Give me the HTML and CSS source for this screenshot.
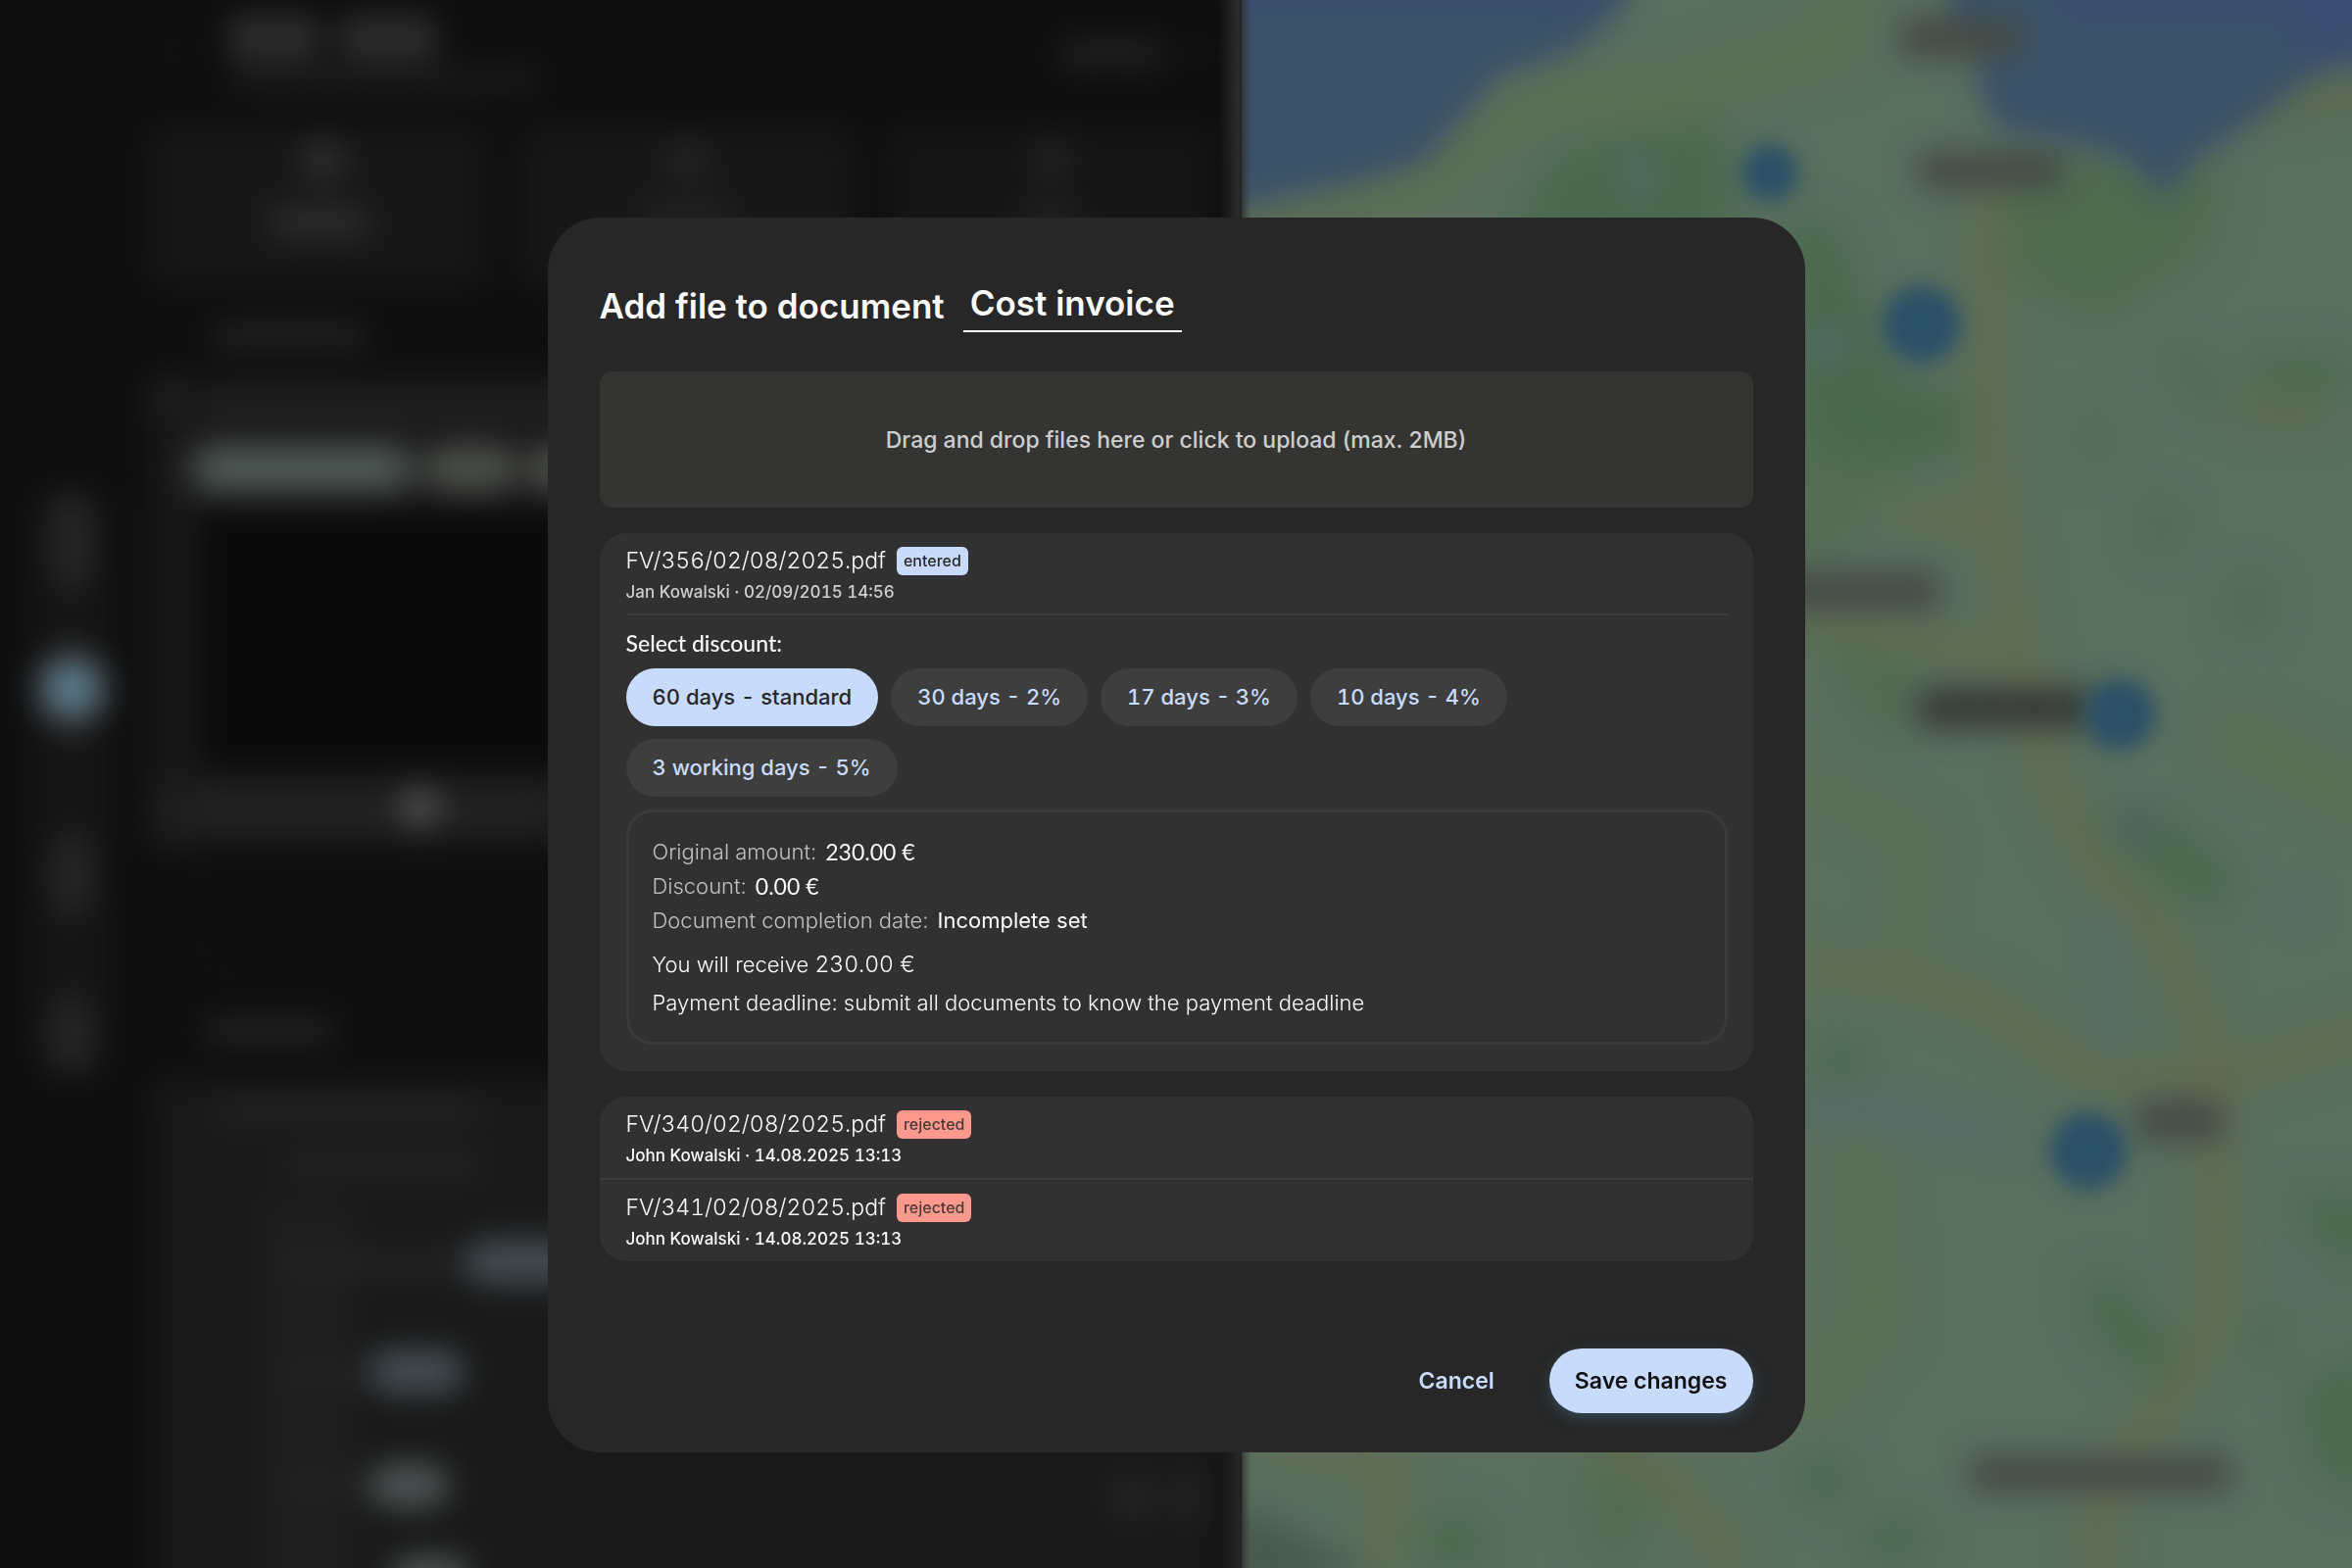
FILE: index.html
```
<!DOCTYPE html>
<html lang="en">
<head>
<meta charset="utf-8">
<meta name="viewport" content="width=device-width, initial-scale=1">
<title>Add file to document</title>
<link rel="stylesheet" href="styles.css">
</head>
<body>
<svg class="backdrop" viewBox="0 0 1568 1045" preserveAspectRatio="xMidYMid slice" aria-hidden="true">
  <defs>
    <filter id="soft" filterUnits="userSpaceOnUse" x="-80" y="-80" width="1730" height="1210" color-interpolation-filters="sRGB"><feGaussianBlur stdDeviation="10"/></filter>
    <filter id="soft-small" filterUnits="userSpaceOnUse" x="-80" y="-80" width="1730" height="1210" color-interpolation-filters="sRGB"><feGaussianBlur stdDeviation="7"/></filter>
    <filter id="softer" filterUnits="userSpaceOnUse" x="-80" y="-80" width="1730" height="1210" color-interpolation-filters="sRGB"><feGaussianBlur stdDeviation="13"/></filter>
    <linearGradient id="edge" x1="0" x2="1" y1="0" y2="0">
      <stop offset="0" stop-color="#2b2c2d" stop-opacity="0"/>
      <stop offset="0.6" stop-color="#2b2c2d"/>
      <stop offset="1" stop-color="#2b2c2d" stop-opacity="0"/>
    </linearGradient>
    <clipPath id="mapClip"><rect x="828" y="0" width="740" height="1045"/></clipPath>
    <clipPath id="appClip"><rect x="0" y="0" width="828" height="1045"/></clipPath>
  </defs>
  <rect width="1568" height="1045" fill="#0e0e0e"/>

  <!-- map -->
  <g clip-path="url(#mapClip)">
    <rect x="820" width="748" height="1045" fill="#5a6f5e"/>
    <g filter="url(#softer)">
      <g fill="#4b694f">
        <path d="M1012 145L1035 100L1150 80L1160 160H1012Z"/>
        <path d="M1190 140L1225 150L1262 250L1310 262L1312 300L1262 318L1200 312Z"/>
        <path d="M1312 112L1400 100L1484 110L1470 170L1400 215L1345 190Z" fill="#506b50"/>
        <path d="M1195 300L1260 310L1240 360L1195 380Z" fill="#546c54"/>
        <ellipse cx="1397" cy="292" rx="14" ry="20" fill="#546c54"/>
        <ellipse cx="1441" cy="350" rx="10" ry="18"/>
        <ellipse cx="1499" cy="403" rx="13" ry="18"/>
        <path d="M1440 232L1460 230L1484 270L1470 276Z"/>
        <path d="M1500 235L1568 238V262L1500 254Z"/>
        <path d="M1400 545L1450 548L1492 580L1480 612L1440 590Z"/>
        <ellipse cx="1226" cy="706" rx="22" ry="14"/>
        <path d="M1385 855L1410 850L1452 900L1440 925L1400 895Z"/>
        <ellipse cx="1510" cy="892" rx="12" ry="14"/>
        <path d="M1526 790L1580 800V850L1545 830Z"/>
        <path d="M1530 925L1580 900V1000L1545 985Z"/>
        <ellipse cx="1216" cy="987" rx="20" ry="18"/>
        <ellipse cx="1262" cy="1026" rx="24" ry="16"/>
        <ellipse cx="970" cy="1028" rx="24" ry="20"/>
        <path d="M820 1000L880 1030L920 1060H820Z" fill="#48584c"/>
        <path d="M1050 980H1110L1090 1040H1060Z" fill="#526b53"/>
        <path d="M1195 400L1260 430L1290 470L1250 500Z" fill="#526b53"/>
      </g>
      <g fill="none" stroke="#606c50" stroke-width="22" stroke-linejoin="round">
        <path d="M820 155L900 130L955 118L985 90L1040 62L1110 66L1150 50L1225 30L1235 -20" stroke="#5c6e54" stroke-width="34"/>
        <path d="M1327 120L1325 217L1327 317L1342 417L1366 520L1400 580L1443 625L1472 692L1477 823L1477 880L1438 945L1400 1000L1400 1060"/>
        <path d="M1190 644L1260 650L1322 668L1390 714L1472 722L1520 705L1590 685"/>
        <path d="M1480 485L1590 540" stroke="#5c6e54" stroke-width="34"/>
        <path d="M1060 960L1110 985L1160 1045"/>
        <path d="M840 960L930 975L920 1045"/>
        <path d="M1195 410L1270 425L1350 440"/>
        <path d="M1260 340L1330 350"/>
        <path d="M1240 760L1250 880L1200 940" stroke="#5c6e54" stroke-width="34"/>
        <path d="M1490 70L1580 60M1490 270L1550 275" stroke="#5c6950"/>
        <path d="M1200 520L1280 560L1270 640" stroke="#5c6e54"/>
      </g>
    </g>
    <g filter="url(#soft)">
      <g fill="#3a5268" stroke="#3b4d6c" stroke-width="8">
        <path d="M760 -60H1098L1078 4L1047 30L994 48L970 77L945 105L900 118L858 126L760 150Z"/>
        <path d="M1290 -60L1306 10L1346 20L1320 50L1334 82L1390 92L1424 104L1443 126L1460 102L1487 86L1540 46L1640 20V-60Z"/>
      </g>
      <path d="M760 -60H1078L1058 6H760Z" fill="#3b4c70"/>
      <path d="M1330 -60H1640V26L1540 40L1520 14H1380Z" fill="#3b4c70"/>
      <g fill="#454b46">
        <rect x="1266" y="11" width="82" height="28" rx="8"/>
        <rect x="1278" y="101" width="98" height="25" rx="8"/>
        <rect x="1190" y="380" width="104" height="27" rx="8"/>
        <rect x="1278" y="459" width="118" height="26" rx="8" fill="#353836"/>
        <rect x="1424" y="733" width="58" height="28" rx="8"/>
        <rect x="1312" y="970" width="176" height="24" rx="8"/>
      </g>
      <g fill="#566b6a">
        <circle cx="1092" cy="118" r="11"/>
        <circle cx="1218" cy="230" r="12"/>
        <path d="M1200 730L1260 732L1340 752L1345 765L1250 750L1200 746Z"/>
        <path d="M1408 545L1430 540L1440 552L1420 560Z" fill="#4d6065"/>
        <circle cx="1532" cy="604" r="9"/>
        <circle cx="1532" cy="850" r="8"/>
        <path d="M1400 610H1410L1412 700H1402Z"/>
      </g>
    </g>
    <g filter="url(#soft-small)" fill="#2a5067">
      <circle cx="1180" cy="115" r="19"/>
      <circle cx="1281" cy="216" r="26"/>
      <circle cx="1413" cy="476" r="24"/>
      <circle cx="1392" cy="767" r="26"/>
    </g>
  </g>
  <rect x="812" width="22" height="1045" fill="url(#edge)"/>

  <!-- application panel -->
  <g clip-path="url(#appClip)">
    <g filter="url(#soft)" fill="#161616">
      <rect x="22" y="322" width="52" height="400" rx="24"/>
      <rect x="98" y="84" width="228" height="108" rx="12" fill="#171717"/>
      <rect x="345" y="84" width="226" height="108" rx="12" fill="#171717"/>
      <rect x="590" y="84" width="220" height="108" rx="12" fill="#151515"/>
      <rect x="98" y="248" width="700" height="320" rx="12" fill="#181818"/>
      <rect x="134" y="340" width="680" height="172" fill="#0a0a0a"/>
      <rect x="100" y="522" width="700" height="38" rx="8" fill="#1e1e1e"/>
      <rect x="134" y="562" width="680" height="88" fill="#0e0e0e" stroke="#141414" stroke-width="4"/>
      <rect x="100" y="718" width="718" height="380" rx="12" fill="#191919"/>
      <rect x="178" y="800" width="58" height="260" fill="#1e1e1e"/>
      <g fill="#2d2d2d">
        <rect x="152" y="10" width="62" height="30" rx="8"/>
        <rect x="226" y="10" width="66" height="30" rx="8"/>
        <rect x="154" y="44" width="206" height="18" rx="6" fill="#1b1b1b"/>
        <rect x="705" y="25" width="72" height="22" rx="8" fill="#1f1f1f"/>
        <rect x="784" y="30" width="26" height="10" rx="5" fill="#151515"/>
        <circle cx="116" cy="35" r="7" fill="#141414"/>
        <circle cx="216" cy="107" r="15"/>
        <circle cx="458" cy="107" r="14" fill="#242424"/>
        <circle cx="701" cy="107" r="14" fill="#222222"/>
        <rect x="180" y="138" width="66" height="20" rx="8"/>
        <rect x="428" y="136" width="60" height="18" rx="8" fill="#242424"/>
        <rect x="678" y="136" width="44" height="18" rx="8" fill="#222222"/>
        <rect x="140" y="214" width="106" height="19" rx="8" fill="#212121"/>
        <rect x="134" y="264" width="260" height="16" rx="8" fill="#212121"/>
        <circle cx="110" cy="264" r="12" fill="#1f1f1f"/>
        <rect x="124" y="294" width="156" height="36" rx="18" fill="#3c3f3d"/>
        <rect x="134" y="301" width="134" height="22" rx="11" fill="#4f5c57"/>
        <rect x="282" y="296" width="64" height="32" rx="16" fill="#4a4d49"/>
        <rect x="350" y="296" width="64" height="32" rx="16" fill="#4a4d49"/>
        <rect x="132" y="534" width="230" height="12" rx="6" fill="#252525"/>
        <circle cx="280" cy="538" r="14" fill="#4a4c4a"/>
        <rect x="135" y="678" width="90" height="18" rx="8" fill="#222222"/>
        <rect x="144" y="732" width="176" height="16" rx="8" fill="#222222"/>
        <rect x="190" y="768" width="130" height="15" rx="7" fill="#242424"/>
        <rect x="185" y="834" width="140" height="16" rx="7" fill="#232323"/>
        <rect x="185" y="908" width="60" height="16" rx="7" fill="#222222"/>
        <rect x="185" y="982" width="60" height="16" rx="7" fill="#222222"/>
        <rect x="310" y="826" width="80" height="30" rx="15" fill="#434c51"/>
        <rect x="246" y="899" width="64" height="30" rx="15" fill="#434c51"/>
        <rect x="246" y="975" width="54" height="30" rx="15" fill="#4b5352"/>
        <rect x="260" y="1037" width="54" height="30" rx="15" fill="#4b5352"/>
        <circle cx="755" cy="998" r="13" fill="#272727"/>
        <circle cx="790" cy="998" r="12" fill="#252525"/>
        <rect x="34" y="330" width="28" height="62" rx="14" fill="#262626"/>
        <rect x="34" y="556" width="28" height="54" rx="14" fill="#262626"/>
        <rect x="34" y="664" width="28" height="50" rx="14" fill="#262626"/>
      </g>
      <circle cx="48" cy="459" r="26" fill="#454a4c"/>
      <circle cx="48" cy="459" r="15" fill="#5a8096"/>
    </g>
  </g>
</svg>

<main class="stage">
  <form class="modal" role="dialog" aria-labelledby="modal-title">
    <header class="modal-header">
      <h1 class="modal-title" id="modal-title">Add file to document</h1>
      <select class="doc-type" aria-label="Document type">
        <option selected>Cost invoice</option>
      </select>
    </header>

    <label class="dropzone">
      <input class="visually-hidden" type="file">
      <span>Drag and drop files here or click to upload (max. 2MB)</span>
    </label>

    <section class="card">
      <div class="file file-open">
        <div class="file-line">
          <span class="file-name">FV/356/02/08/2025.pdf</span>
          <span class="badge badge-entered">entered</span>
        </div>
        <p class="file-meta file-meta-muted">Jan Kowalski · 02/09/2015 14:56</p>
      </div>

      <fieldset class="discounts">
        <legend class="discounts-title">Select discount:</legend>
        <div class="chips">
          <label class="chip"><input class="visually-hidden" type="radio" name="discount" checked><span>60 days - standard</span></label>
          <label class="chip"><input class="visually-hidden" type="radio" name="discount"><span>30 days - 2%</span></label>
          <label class="chip"><input class="visually-hidden" type="radio" name="discount"><span>17 days - 3%</span></label>
          <label class="chip"><input class="visually-hidden" type="radio" name="discount"><span>10 days - 4%</span></label>
          <label class="chip"><input class="visually-hidden" type="radio" name="discount"><span>3 working days - 5%</span></label>
        </div>
      </fieldset>

      <div class="summary">
        <dl class="details">
          <div class="detail"><dt>Original amount:</dt><dd class="amount">230.00 €</dd></div>
          <div class="detail"><dt>Discount:</dt><dd class="amount">0.00 €</dd></div>
          <div class="detail"><dt>Document completion date:</dt><dd>Incomplete set</dd></div>
        </dl>
        <p class="outcome">You will receive <span class="outcome-amount">230.00 €</span></p>
        <p class="outcome">Payment deadline: submit all documents to know the payment deadline</p>
      </div>
    </section>

    <section class="card card-list">
      <div class="file">
        <div class="file-line">
          <span class="file-name">FV/340/02/08/2025.pdf</span>
          <span class="badge badge-rejected">rejected</span>
        </div>
        <p class="file-meta">John Kowalski · 14.08.2025 13:13</p>
      </div>
      <div class="file">
        <div class="file-line">
          <span class="file-name">FV/341/02/08/2025.pdf</span>
          <span class="badge badge-rejected">rejected</span>
        </div>
        <p class="file-meta">John Kowalski · 14.08.2025 13:13</p>
      </div>
    </section>

    <footer class="actions">
      <button class="button button-text" type="button">Cancel</button>
      <button class="button button-primary" type="submit">Save changes</button>
    </footer>
  </form>
</main>
</body>
</html>
```
FILE: styles.css
```
*,
*::before,
*::after {
  box-sizing: border-box;
}

body {
  margin: 0;
  min-height: 100vh;
  background: #0e0e0e;
  color: #fafafa;
  font-family: Inter, "Liberation Sans", sans-serif;
  font-size: 22px;
}

h1,
p,
dl,
dd {
  margin: 0;
}

.visually-hidden {
  position: absolute;
  width: 1px;
  height: 1px;
  margin: 0;
  opacity: 0;
}

/* Blurred application behind the dialog */
.backdrop {
  position: fixed;
  inset: 0;
  width: 100%;
  height: 100%;
}

.stage {
  position: relative;
  display: flex;
  justify-content: center;
  padding: 222px 24px 100px;
}

/* Dialog */
.modal {
  flex: 0 1 1283px;
  padding: 65px 53px 40px;
  border-radius: 54px;
  background: #272727;
}

.modal-header {
  display: flex;
  flex-wrap: wrap;
  align-items: flex-end;
  gap: 19px;
  margin-bottom: 40px;
}

.modal-title {
  padding-bottom: 5px;
  font-size: 35px;
  font-weight: 600;
  line-height: 44px;
}

.doc-type {
  appearance: none;
  padding: 0 7px 6px;
  border: 0;
  border-bottom: 2px solid #fafafa;
  border-radius: 0;
  background: none;
  color: #fafafa;
  font: 600 35px/44px Inter, "Liberation Sans", sans-serif;
}

.dropzone {
  position: relative;
  display: grid;
  place-items: center;
  min-height: 139px;
  border-radius: 13px;
  background: #343433;
  color: #cdcecd;
  font-size: 23px;
  font-weight: 500;
  cursor: pointer;
}

/* File cards */
.card {
  margin-top: 26px;
  padding: 14px 26px 27px 27px;
  border-radius: 27px;
  background: #313131;
}

.card-list {
  padding: 0;
}

.card-list .file {
  padding: 14px 26px 12px 27px;
}

.card-list .file + .file {
  border-top: 2px solid #3b3b3b;
}

.file-open {
  padding-bottom: 11px;
  border-bottom: 2px solid #3b3b3b;
}

.file-line {
  display: flex;
  gap: 11px;
  height: 29px;
}

.file-name {
  font-size: 23px;
  font-weight: 300;
  font-variant-numeric: tabular-nums;
  line-height: 29px;
}

.badge {
  padding: 0 7px;
  border-radius: 6px;
  font-size: 16px;
  font-weight: 500;
  line-height: 29px;
}

.badge-entered {
  background: #c9dbfc;
  color: #272727;
}

.badge-rejected {
  background: #ff998e;
  color: #4a3a38;
}

.file-meta {
  margin-top: 6px;
  font-size: 17px;
  font-weight: 500;
  font-variant-numeric: tabular-nums;
  line-height: 22px;
}

.file-meta-muted {
  color: #cdcecd;
}

/* Discount choice */
.discounts {
  margin: 14px 0 13px;
  padding: 0;
  border: 0;
}

.discounts-title {
  padding: 0;
  margin-bottom: 12px;
  font: 500 23px/28px Lato, sans-serif;
}

.chips {
  display: flex;
  flex-wrap: wrap;
  gap: 13px;
  max-width: 940px;
}

.chip {
  position: relative;
  padding: 0 27px;
  border-radius: 30px;
  background: #3d3e3d;
  color: #c9dbfc;
  font-weight: 500;
  font-variant-numeric: tabular-nums;
  line-height: 59px;
  cursor: pointer;
}

.chip:has(:checked) {
  background: #c9dbfc;
  color: #272727;
}

/* Payment summary */
.summary {
  padding: 23px 24px 20px;
  border: 3px solid #3a3a39;
  border-radius: 27px;
}

.details {
  margin-bottom: 8px;
}

.detail {
  display: flex;
  gap: 9px;
  line-height: 35px;
}

.detail dt {
  color: #bfc1c0;
  font-weight: 300;
}

.amount {
  font-family: Lato, sans-serif;
  font-size: 23px;
}

.outcome {
  font-weight: 300;
  line-height: 39px;
}

.outcome-amount {
  font-size: 23px;
  font-variant-numeric: tabular-nums;
}

/* Footer buttons */
.actions {
  display: flex;
  justify-content: flex-end;
  gap: 30px;
  margin-top: 89px;
}

.button {
  padding: 0 26px;
  border: 0;
  border-radius: 33px;
  font: 600 23px/66px Inter, "Liberation Sans", sans-serif;
  cursor: pointer;
}

.button-text {
  background: none;
  color: #c9dbfc;
}

.button-primary {
  background: #c9dbfc;
  color: #111111;
  box-shadow: 0 5px 14px rgba(70, 120, 150, 0.4);
}
```
